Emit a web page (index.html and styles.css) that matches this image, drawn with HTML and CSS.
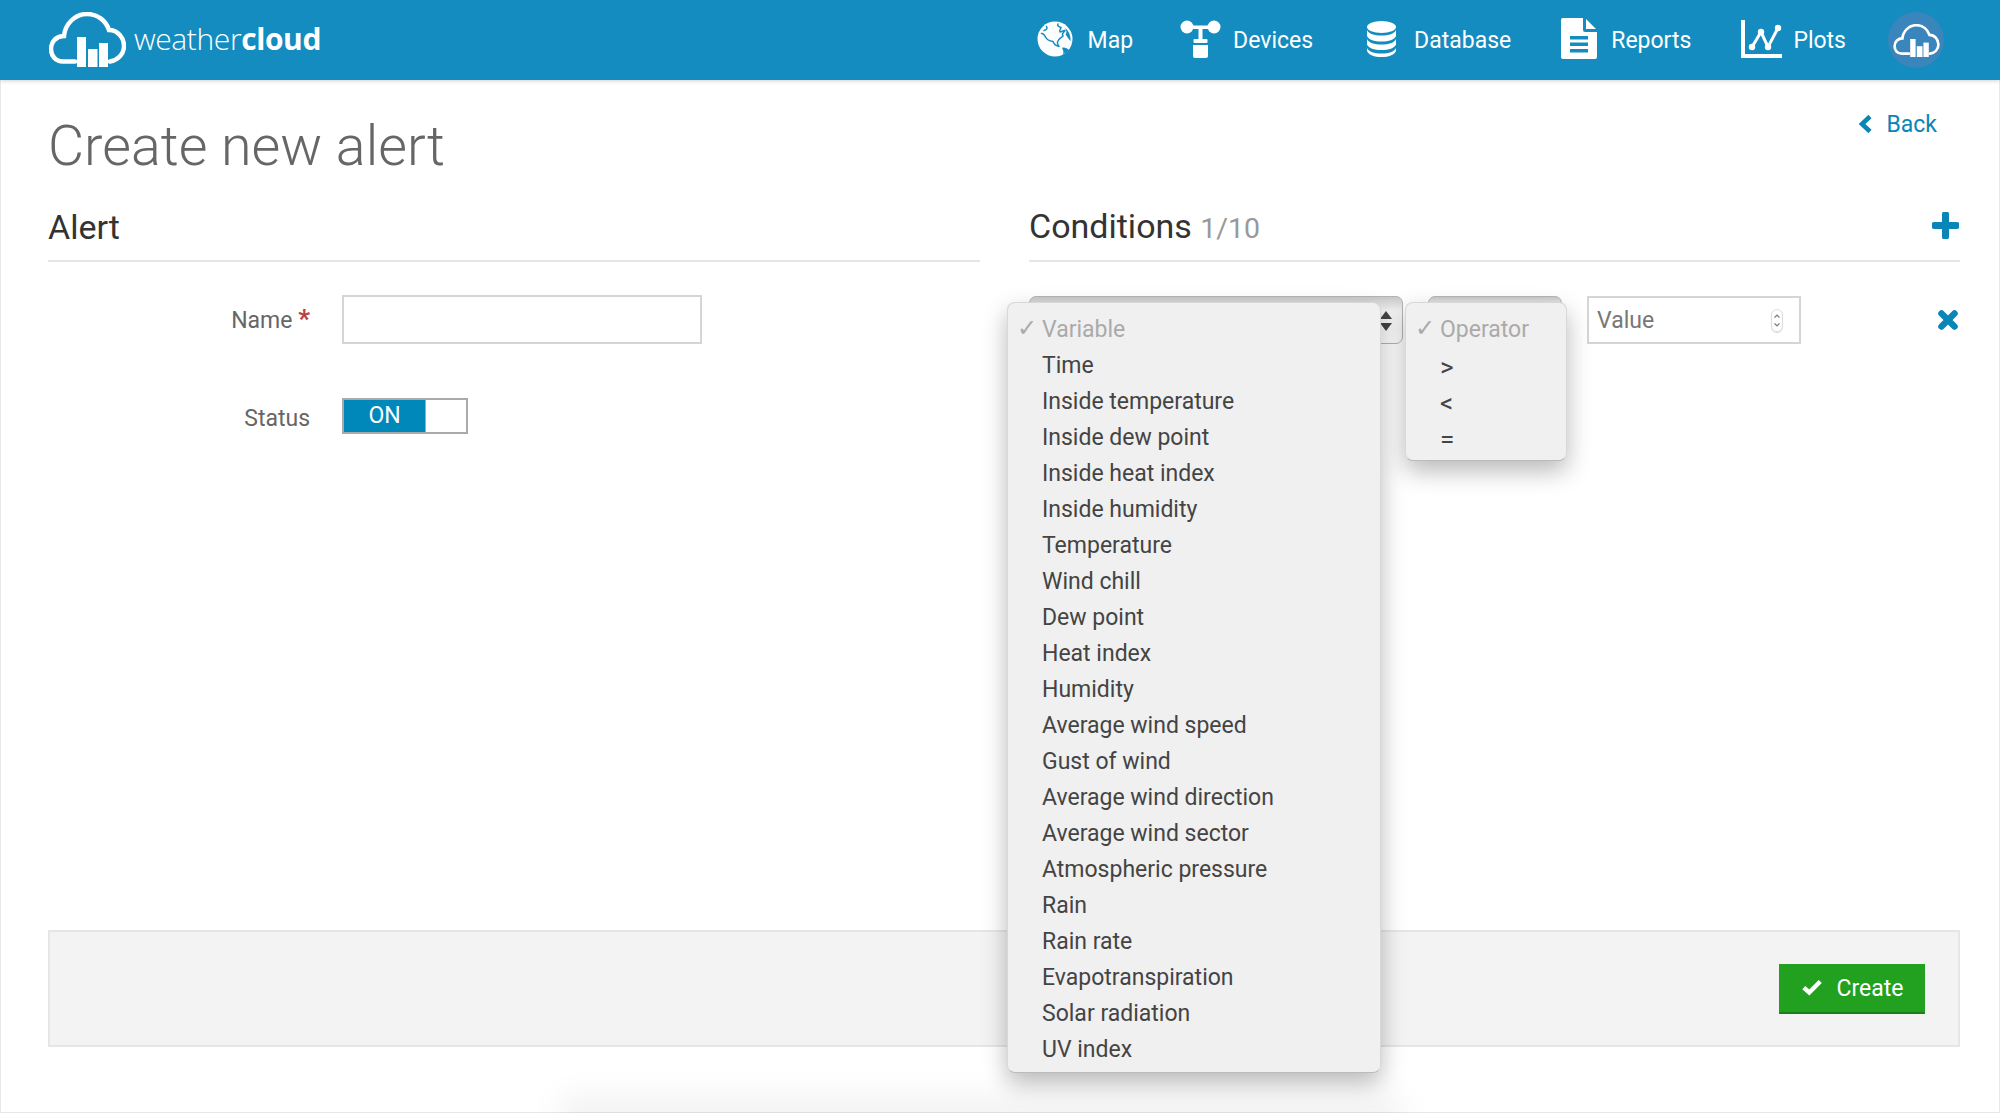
FILE: index.html
```html
<!DOCTYPE html>
<html lang="en">
<head>
<meta charset="utf-8">
<title>Create new alert</title>
<link rel="stylesheet" href="styles.css">
</head>
<body>
<svg class="defs" width="0" height="0" aria-hidden="true">
  <symbol id="cloud" viewBox="0 0 77 55">
    <path d="M26 49.5H14C6 49.5 2 43 2 37C2 29 8 24 15 24C16 12 26 2 38 2C49 2 57 9 60 18C69 18 75 26 75 34C75 42 69 48 61 49.5" fill="none" stroke="#fff" stroke-width="4.5" stroke-linecap="round"/>
    <rect x="28" y="25" width="9" height="30" fill="#fff"/>
    <rect x="39" y="37" width="9.500" height="18" fill="#fff"/>
    <rect x="50" y="31" width="9" height="24" fill="#fff"/>
  </symbol>
</svg>
<header class="topbar">
  <a class="brand">
    <svg class="brand-cloud"><use href="#cloud"/></svg>
    <span class="brand-name">weather<b>cloud</b></span>
  </a>
  <nav class="nav">
    <a class="nav-item nav-map">
      <svg class="icon-map" viewBox="0 0 36 36"><circle cx="18" cy="18" r="17.500" fill="#fff"/><path d="M9.500 5.500C11 8 9 9 7 9.500M21 3C20 5 22 6 24 6.500C24 8 22 9 23 11C25 11 26 9 28 9.500C27 12 24 12 26 15C24 17 21 18 20.500 21C20 23 21 24 22 25.500M22 25.500C19 25 17 23 16 20.500C13 20 10 19 8.500 16C7.500 14 6.500 12 4.500 12.500" fill="none" stroke="#148cbf" stroke-width="1.500" stroke-linecap="round" stroke-linejoin="round"/><path d="M28 7C31 9 34 14 33.500 20C31 18 30 15 28.500 13.500C30 12 29.500 9 28 7ZM25 27C27 26 30 27 32 29C30 31 28 32.500 26 33C27 31 26 29 25 27Z" fill="#148cbf"/></svg>
      <span>Map</span>
    </a>
    <a class="nav-item nav-devices">
      <svg class="icon-devices" viewBox="0 0 41 38"><circle cx="7" cy="7" r="6.500" fill="#fff"/><circle cx="34" cy="7" r="6.500" fill="#fff"/><rect x="8" y="5.500" width="25" height="3.500" fill="#fff"/><rect x="18.500" y="6" width="4" height="14" fill="#fff"/><rect x="13.500" y="19" width="14" height="4" rx="1" fill="#fff"/><path d="M13 25H28V36a2 2 0 0 1-2 2H15a2 2 0 0 1-2-2Z" fill="#fff"/></svg>
      <span>Devices</span>
    </a>
    <a class="nav-item nav-database">
      <svg class="icon-database" viewBox="0 0 29 36"><ellipse cx="14.500" cy="6" rx="14.500" ry="6" fill="#fff"/><path d="M0 9C2 13 7 14.500 14.500 14.500S27 13 29 9V15C27 19 22 20.500 14.500 20.500S2 19 0 15Z" fill="#fff"/><path d="M0 18.500C2 22.500 7 24 14.500 24S27 22.500 29 18.500V24C27 28 22 29.500 14.500 29.500S2 28 0 24Z" fill="#fff" transform="translate(0 -.5)"/><path d="M0 27C2 31 7 32.500 14.500 32.500S27 31 29 27V30C27 34 22 36 14.500 36S2 34 0 30Z" fill="#fff"/></svg>
      <span>Database</span>
    </a>
    <a class="nav-item nav-reports">
      <svg class="icon-reports" viewBox="0 0 36 41"><path d="M2 0H22V12a2 2 0 0 0 2 2H36V39a2 2 0 0 1-2 2H2a2 2 0 0 1-2-2V2a2 2 0 0 1 2-2Z" fill="#fff"/><path d="M25 1L35 11H25Z" fill="#fff"/><rect x="9" y="18" width="18" height="3.500" fill="#148cbf"/><rect x="9" y="24.500" width="18" height="3.500" fill="#148cbf"/><rect x="9" y="31" width="18" height="3.500" fill="#148cbf"/></svg>
      <span>Reports</span>
    </a>
    <a class="nav-item nav-plots">
      <svg class="icon-plots" viewBox="0 0 41 38"><path d="M2 0V36H41" fill="none" stroke="#fff" stroke-width="4"/><path d="M11 27L20 12L27 27L37 8" fill="none" stroke="#fff" stroke-width="3"/><circle cx="11" cy="27" r="3.200" fill="#fff"/><circle cx="20" cy="12" r="3.200" fill="#fff"/><circle cx="27" cy="27" r="3.200" fill="#fff"/><circle cx="37" cy="8" r="3.200" fill="#fff"/></svg>
      <span>Plots</span>
    </a>
    <a class="avatar"><svg class="avatar-cloud"><use href="#cloud"/></svg></a>
  </nav>
</header>

<main class="page">
  <div class="title-row">
    <h1 class="title">Create new alert</h1>
    <a class="back">
      <svg class="back-icon" viewBox="0 0 15 20"><path d="M12 2.500L4 10L12 17.500" fill="none" stroke="#0a85b8" stroke-width="4.500"/></svg>
      <span>Back</span>
    </a>
  </div>

  <div class="columns">
    <section>
      <div class="section-head"><h2 class="section-title">Alert</h2></div>
      <div class="form-row form-row-name">
        <label class="form-label">Name <span class="required">*</span></label>
        <input class="text-input" type="text">
      </div>
      <div class="form-row form-row-status">
        <span class="form-label">Status</span>
        <div class="toggle"><span class="toggle-on">ON</span><span class="toggle-off"></span></div>
      </div>
    </section>

    <section>
      <div class="section-head section-head-split">
        <h2 class="section-title">Conditions <small class="count">1/10</small></h2>
        <svg class="icon-plus" viewBox="0 0 27 27"><path d="M13.500 2.500V24.500M2.500 13.500H24.500" stroke="#0a85b8" stroke-width="7" stroke-linecap="round"/></svg>
      </div>
      <div class="condition-row">
        <div class="select select-variable">
          <svg class="select-arrows" viewBox="0 0 12 20"><path d="M6 0L12 8H0ZM6 20L0 12H12Z" fill="#444"/></svg>
        </div>
        <div class="select select-operator"></div>
        <div class="value-input">
          <span class="value-text">Value</span>
          <span class="spinner"><svg viewBox="0 0 12 23"><path d="M3 8L6 5L9 8M3 15L6 18L9 15" fill="none" stroke="#777" stroke-width="1.500"/></svg></span>
        </div>
        <svg class="icon-remove" viewBox="0 0 20 20"><path d="M3.500 3.500L16.500 16.500M16.500 3.500L3.500 16.500" stroke="#0a85b8" stroke-width="6.500" stroke-linecap="round"/></svg>

        <ul class="menu menu-variable">
          <li class="menu-item menu-item-off">Variable</li>
          <li class="menu-item">Time</li>
          <li class="menu-item">Inside temperature</li>
          <li class="menu-item">Inside dew point</li>
          <li class="menu-item">Inside heat index</li>
          <li class="menu-item">Inside humidity</li>
          <li class="menu-item">Temperature</li>
          <li class="menu-item">Wind chill</li>
          <li class="menu-item">Dew point</li>
          <li class="menu-item">Heat index</li>
          <li class="menu-item">Humidity</li>
          <li class="menu-item">Average wind speed</li>
          <li class="menu-item">Gust of wind</li>
          <li class="menu-item">Average wind direction</li>
          <li class="menu-item">Average wind sector</li>
          <li class="menu-item">Atmospheric pressure</li>
          <li class="menu-item">Rain</li>
          <li class="menu-item">Rain rate</li>
          <li class="menu-item">Evapotranspiration</li>
          <li class="menu-item">Solar radiation</li>
          <li class="menu-item">UV index</li>
        </ul>
        <ul class="menu menu-operator">
          <li class="menu-item menu-item-off">Operator</li>
          <li class="menu-item menu-item-symbol">&gt;</li>
          <li class="menu-item menu-item-symbol">&lt;</li>
          <li class="menu-item menu-item-symbol">=</li>
        </ul>
      </div>
    </section>
  </div>

  <footer class="actions">
    <button class="btn-create" type="button">
      <svg class="btn-check" viewBox="0 0 20 16"><path d="M2.500 8.500L7.500 13L17.500 3" fill="none" stroke="#fff" stroke-width="4"/></svg>
      <span>Create</span>
    </button>
  </footer>
  <div class="bottom-shade"></div>
</main>
</body>
</html>
```

FILE: styles.css
```css
* { box-sizing: border-box; }
html, body { margin: 0; height: 100%; }
body {
  background: #fff;
  color: #444;
  font-family: Roboto, "Liberation Sans", sans-serif;
  font-size: 23px;
  overflow: hidden;
}
.defs { position: absolute; }

.topbar {
  height: 80px;
  background: #148cbf;
  display: flex;
  align-items: center;
  padding-left: 49px;
  color: #fff;
  box-shadow: 0 1px 4px rgba(0, 0, 0, .18);
  position: relative;
  z-index: 2;
}
.brand { display: flex; align-items: center; }
.brand-cloud { width: 77px; height: 55px; margin-top: -1px; }
.brand-name {
  font-family: "Open Sans", sans-serif;
  font-size: 30px;
  font-weight: 300;
  margin-left: 8px;
  letter-spacing: -.4px;
  line-height: 1;
  margin-top: -2px;
}
.brand-name b { font-weight: 700; }

.nav { margin-left: auto; display: flex; align-items: center; padding-right: 56px; }
.nav-item { display: flex; align-items: center; height: 56px; line-height: 1; }
.nav-item span { margin-top: 0; }
.nav-devices { margin-left: 47px; gap: 12px; }
.nav-database { margin-left: 54px; gap: 18px; }
.nav-reports { margin-left: 50px; gap: 14px; }
.nav-plots { margin-left: 50px; gap: 11px; }
.nav-map { gap: 15px; }
.icon-map { width: 36px; height: 36px; margin-top: -2px; }
.icon-devices { width: 41px; height: 38px; margin-top: -2px; }
.icon-database { width: 29px; height: 36px; margin-top: -2px; }
.icon-reports { width: 36px; height: 41px; margin-top: -3px; }
.icon-plots { width: 41px; height: 38px; margin-top: -2px; }
.avatar {
  margin-left: 42px;
  width: 56px;
  height: 56px;
  border-radius: 50%;
  background: #3a85bb;
  display: flex;
  align-items: center;
  justify-content: center;
}
.avatar-cloud { width: 47px; height: 33px; }

.page {
  height: 1033px;
  border: 1px solid #e8e8e8;
  border-top: 0;
  padding: 0 39px 65px 47px;
  display: flex;
  flex-direction: column;
  position: relative;
}
.title-row { display: flex; justify-content: space-between; align-items: flex-start; }
.title {
  margin: 34px 0 0;
  font-size: 55.600px;
  font-weight: 300;
  line-height: 64px;
  color: #666;
}
.back {
  display: flex;
  align-items: center;
  gap: 13px;
  margin: 29px 23px 0 0;
  color: #0a85b8;
  line-height: 32px;
}
.back-icon { width: 15px; height: 20px; margin-top: -2px; }

.columns {
  display: grid;
  grid-template-columns: 932px 931px;
  column-gap: 49px;
  margin-top: 17px;
}
.section-head {
  height: 67px;
  border-bottom: 2px solid #e6e6e6;
  display: flex;
  align-items: center;
  padding-bottom: 1px;
}
.section-head-split { justify-content: space-between; padding-right: 0; }
.section-title { margin: 0; font-size: 34px; font-weight: 400; color: #333; line-height: 44px; }
.count { font-size: 28.500px; color: #999; font-weight: 400; }
.icon-plus { width: 27px; height: 27px; margin: -4px 1px 0 0; }

.form-row { display: flex; align-items: center; }
.form-row-name { margin-top: 33px; }
.form-row-status { margin-top: 54px; }
.form-label { width: 262px; margin-right: 32px; text-align: right; color: #666; }
.form-row-status .form-label { margin-top: 4px; }
.required { color: #b8453c; font-weight: 700; font-size: 26px; line-height: 1; }
.text-input {
  width: 360px;
  height: 49px;
  border: 2px solid #d5d5d5;
  background: #fff;
  border-radius: 0;
  padding: 0;
  margin: 0;
}
.toggle {
  width: 126px;
  height: 36px;
  border: 2px solid #aaa;
  display: flex;
  background: #fff;
}
.toggle-on {
  width: 82px;
  background: #0088bb;
  color: #fff;
  text-align: center;
  line-height: 32px;
  border-right: 1px solid #aaa;
}
.toggle-off { flex: 1; }

.condition-row {
  position: relative;
  height: 48px;
  margin-top: 34px;
  display: flex;
  align-items: stretch;
}
.select {
  border: 1px solid #b5b5b5;
  border-radius: 7px;
  background: linear-gradient(#c9c9c9, #f4f4f4 30%, #fff);
  position: relative;
}
.select-variable { width: 374px; }
.select-operator { width: 134px; margin-left: 25px; height: 30px; }
.select-arrows { position: absolute; right: 10px; top: 14px; width: 12px; height: 20px; }
.value-input {
  width: 214px;
  margin-left: 25px;
  border: 2px solid #d5d5d5;
  display: flex;
  align-items: center;
  justify-content: space-between;
  padding: 0 16px 0 8px;
  color: #777;
}
.value-text { line-height: 1; margin-top: 1px; }
.spinner {
  width: 12px;
  height: 23px;
  border: 1px solid #ddd;
  border-radius: 6px;
  box-shadow: 0 1px 1px rgba(0, 0, 0, .15);
  display: flex;
}
.spinner svg { width: 100%; height: 100%; }
.icon-remove { position: absolute; left: 909px; top: 14px; width: 20px; height: 20px; }

.menu {
  position: absolute;
  top: 6px;
  margin: 0;
  padding: 9px 0 4px;
  list-style: none;
  background: #f0f0f0;
  border: 1px solid #d8d8d8;
  border-bottom-color: #bbb;
  border-radius: 8px;
  box-shadow: 0 10px 24px rgba(0, 0, 0, .28);
  z-index: 3;
}
.menu-variable { left: -22px; width: 374px; }
.menu-operator { left: 376px; width: 162px; }
.menu-item {
  height: 36px;
  line-height: 36px;
  padding-left: 34px;
  color: #444;
  white-space: nowrap;
  position: relative;
}
.menu-item-symbol { font-size: 26px; padding-top: 1px; }
.menu-item-off { color: #aaa; }
.menu-item-off::before {
  content: "\2713";
  position: absolute;
  left: 9px;
  top: -2px;
  font-family: "DejaVu Sans", sans-serif;
  font-size: 24px;
}

.actions {
  margin-top: auto;
  height: 117px;
  background: #f3f3f3;
  border: 2px solid #e6e6e6;
  display: flex;
  justify-content: flex-end;
  align-items: center;
  padding-right: 33px;
}
.btn-create {
  width: 146px;
  height: 50px;
  background: #22a120;
  border: 1px solid #22a120;
  border-bottom: 2px solid #1a7f18;
  color: #fff;
  font: 400 23px Roboto, sans-serif;
  display: flex;
  align-items: center;
  justify-content: center;
  gap: 14px;
  padding: 0;
}
.btn-check { width: 22px; height: 18px; margin-top: -3px; }
.bottom-shade {
  position: absolute;
  left: 560px;
  bottom: -20px;
  width: 840px;
  height: 36px;
  background: rgba(0, 0, 0, .05);
  filter: blur(14px);
}
```
